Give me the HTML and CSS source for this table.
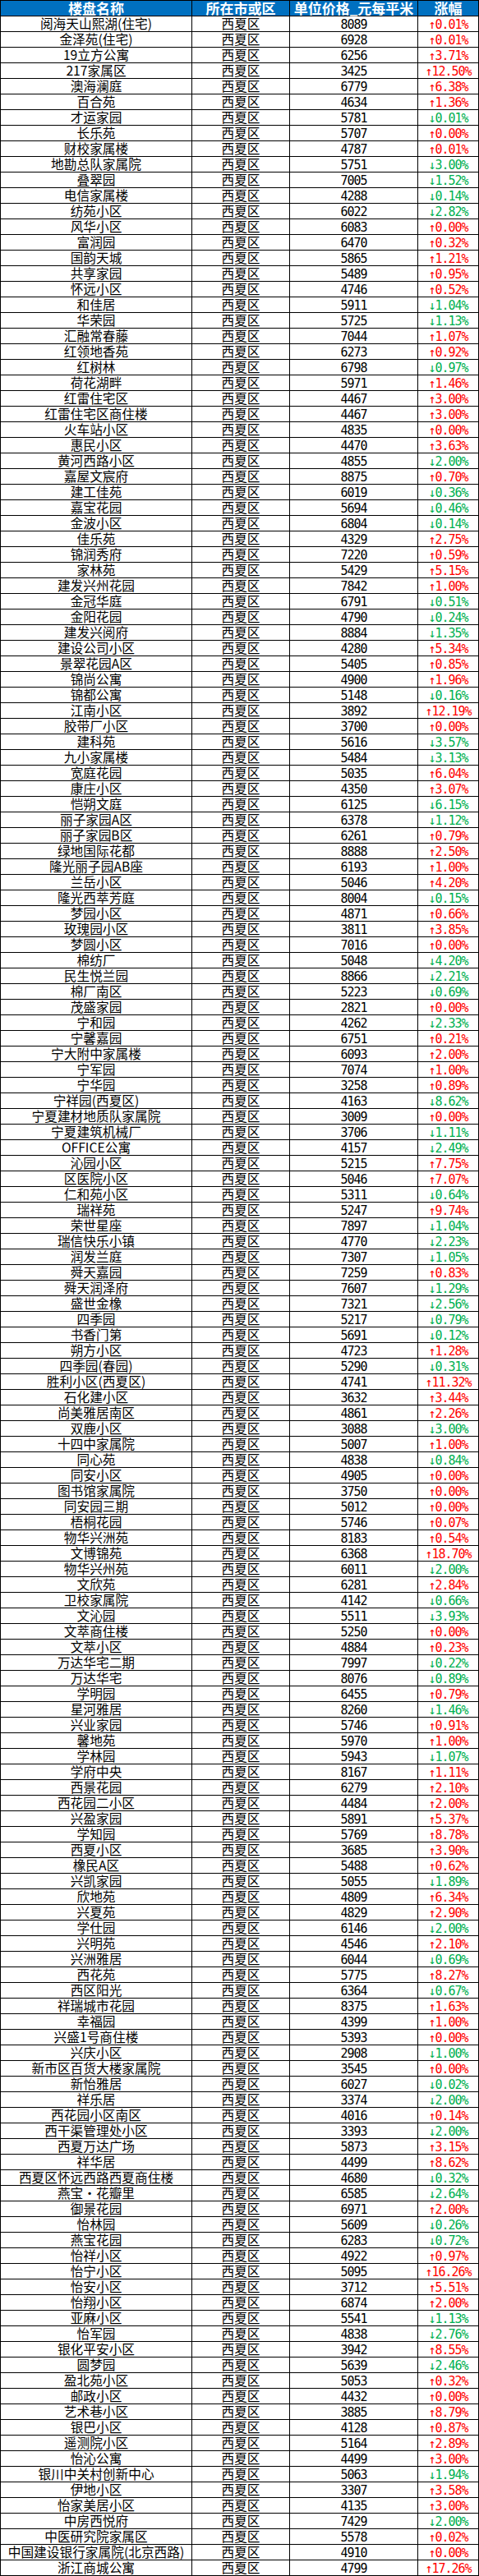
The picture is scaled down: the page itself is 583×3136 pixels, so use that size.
FILE: index.html
```html
<!DOCTYPE html>
<html lang="zh-CN">
<head>
<meta charset="utf-8">
<title>西夏区楼盘单位价格</title>
<link rel="stylesheet" href="styles.css">
</head>
<body>
<table class="sheet">
<colgroup><col class="c-name"><col class="c-area"><col class="c-price"><col class="c-chg"></colgroup>
<thead>
<tr><th>楼盘名称</th><th>所在市或区</th><th>单位价格_元每平米</th><th>涨幅</th></tr>
</thead>
<tbody>
<tr><td>阅海天山熙湖(住宅)</td><td>西夏区</td><td class="num">8089</td><td class="num up">↑0.01%</td></tr>
<tr><td>金泽苑(住宅)</td><td>西夏区</td><td class="num">6928</td><td class="num up">↑0.01%</td></tr>
<tr><td>19立方公寓</td><td>西夏区</td><td class="num">6256</td><td class="num up">↑3.71%</td></tr>
<tr><td>217家属区</td><td>西夏区</td><td class="num">3425</td><td class="num up">↑12.50%</td></tr>
<tr><td>澳海澜庭</td><td>西夏区</td><td class="num">6779</td><td class="num up">↑6.38%</td></tr>
<tr><td>百合苑</td><td>西夏区</td><td class="num">4634</td><td class="num up">↑1.36%</td></tr>
<tr><td>才运家园</td><td>西夏区</td><td class="num">5781</td><td class="num dn">↓0.01%</td></tr>
<tr><td>长乐苑</td><td>西夏区</td><td class="num">5707</td><td class="num up">↑0.00%</td></tr>
<tr><td>财校家属楼</td><td>西夏区</td><td class="num">4787</td><td class="num up">↑0.01%</td></tr>
<tr><td>地勘总队家属院</td><td>西夏区</td><td class="num">5751</td><td class="num dn">↓3.00%</td></tr>
<tr><td>叠翠园</td><td>西夏区</td><td class="num">7005</td><td class="num dn">↓1.52%</td></tr>
<tr><td>电信家属楼</td><td>西夏区</td><td class="num">4288</td><td class="num dn">↓0.14%</td></tr>
<tr><td>纺苑小区</td><td>西夏区</td><td class="num">6022</td><td class="num dn">↓2.82%</td></tr>
<tr><td>风华小区</td><td>西夏区</td><td class="num">6083</td><td class="num up">↑0.00%</td></tr>
<tr><td>富润园</td><td>西夏区</td><td class="num">6470</td><td class="num up">↑0.32%</td></tr>
<tr><td>国韵天城</td><td>西夏区</td><td class="num">5865</td><td class="num up">↑1.21%</td></tr>
<tr><td>共享家园</td><td>西夏区</td><td class="num">5489</td><td class="num up">↑0.95%</td></tr>
<tr><td>怀远小区</td><td>西夏区</td><td class="num">4746</td><td class="num up">↑0.52%</td></tr>
<tr><td>和佳居</td><td>西夏区</td><td class="num">5911</td><td class="num dn">↓1.04%</td></tr>
<tr><td>华荣园</td><td>西夏区</td><td class="num">5725</td><td class="num dn">↓1.13%</td></tr>
<tr><td>汇融常春藤</td><td>西夏区</td><td class="num">7044</td><td class="num up">↑1.07%</td></tr>
<tr><td>红领地香苑</td><td>西夏区</td><td class="num">6273</td><td class="num up">↑0.92%</td></tr>
<tr><td>红树林</td><td>西夏区</td><td class="num">6798</td><td class="num dn">↓0.97%</td></tr>
<tr><td>荷花湖畔</td><td>西夏区</td><td class="num">5971</td><td class="num up">↑1.46%</td></tr>
<tr><td>红雷住宅区</td><td>西夏区</td><td class="num">4467</td><td class="num up">↑3.00%</td></tr>
<tr><td>红雷住宅区商住楼</td><td>西夏区</td><td class="num">4467</td><td class="num up">↑3.00%</td></tr>
<tr><td>火车站小区</td><td>西夏区</td><td class="num">4835</td><td class="num up">↑0.00%</td></tr>
<tr><td>惠民小区</td><td>西夏区</td><td class="num">4470</td><td class="num up">↑3.63%</td></tr>
<tr><td>黄河西路小区</td><td>西夏区</td><td class="num">4855</td><td class="num dn">↓2.00%</td></tr>
<tr><td>嘉屋文宸府</td><td>西夏区</td><td class="num">8875</td><td class="num up">↑0.70%</td></tr>
<tr><td>建工佳苑</td><td>西夏区</td><td class="num">6019</td><td class="num dn">↓0.36%</td></tr>
<tr><td>嘉宝花园</td><td>西夏区</td><td class="num">5694</td><td class="num dn">↓0.46%</td></tr>
<tr><td>金波小区</td><td>西夏区</td><td class="num">6804</td><td class="num dn">↓0.14%</td></tr>
<tr><td>佳乐苑</td><td>西夏区</td><td class="num">4329</td><td class="num up">↑2.75%</td></tr>
<tr><td>锦润秀府</td><td>西夏区</td><td class="num">7220</td><td class="num up">↑0.59%</td></tr>
<tr><td>家林苑</td><td>西夏区</td><td class="num">5429</td><td class="num up">↑5.15%</td></tr>
<tr><td>建发兴州花园</td><td>西夏区</td><td class="num">7842</td><td class="num up">↑1.00%</td></tr>
<tr><td>金冠华庭</td><td>西夏区</td><td class="num">6791</td><td class="num dn">↓0.51%</td></tr>
<tr><td>金阳花园</td><td>西夏区</td><td class="num">4790</td><td class="num dn">↓0.24%</td></tr>
<tr><td>建发兴阅府</td><td>西夏区</td><td class="num">8884</td><td class="num dn">↓1.35%</td></tr>
<tr><td>建设公司小区</td><td>西夏区</td><td class="num">4280</td><td class="num up">↑5.34%</td></tr>
<tr><td>景翠花园A区</td><td>西夏区</td><td class="num">5405</td><td class="num up">↑0.85%</td></tr>
<tr><td>锦尚公寓</td><td>西夏区</td><td class="num">4900</td><td class="num up">↑1.96%</td></tr>
<tr><td>锦都公寓</td><td>西夏区</td><td class="num">5148</td><td class="num dn">↓0.16%</td></tr>
<tr><td>江南小区</td><td>西夏区</td><td class="num">3892</td><td class="num up">↑12.19%</td></tr>
<tr><td>胶带厂小区</td><td>西夏区</td><td class="num">3700</td><td class="num up">↑0.00%</td></tr>
<tr><td>建科苑</td><td>西夏区</td><td class="num">5616</td><td class="num dn">↓3.57%</td></tr>
<tr><td>九小家属楼</td><td>西夏区</td><td class="num">5484</td><td class="num dn">↓3.13%</td></tr>
<tr><td>宽庭花园</td><td>西夏区</td><td class="num">5035</td><td class="num up">↑6.04%</td></tr>
<tr><td>康庄小区</td><td>西夏区</td><td class="num">4350</td><td class="num up">↑3.07%</td></tr>
<tr><td>恺朔文庭</td><td>西夏区</td><td class="num">6125</td><td class="num dn">↓6.15%</td></tr>
<tr><td>丽子家园A区</td><td>西夏区</td><td class="num">6378</td><td class="num dn">↓1.12%</td></tr>
<tr><td>丽子家园B区</td><td>西夏区</td><td class="num">6261</td><td class="num up">↑0.79%</td></tr>
<tr><td>绿地国际花都</td><td>西夏区</td><td class="num">8888</td><td class="num up">↑2.50%</td></tr>
<tr><td>隆光丽子园AB座</td><td>西夏区</td><td class="num">6193</td><td class="num up">↑1.00%</td></tr>
<tr><td>兰岳小区</td><td>西夏区</td><td class="num">5046</td><td class="num up">↑4.20%</td></tr>
<tr><td>隆光西萃芳庭</td><td>西夏区</td><td class="num">8004</td><td class="num dn">↓0.15%</td></tr>
<tr><td>梦园小区</td><td>西夏区</td><td class="num">4871</td><td class="num up">↑0.66%</td></tr>
<tr><td>玫瑰园小区</td><td>西夏区</td><td class="num">3811</td><td class="num up">↑3.85%</td></tr>
<tr><td>梦圆小区</td><td>西夏区</td><td class="num">7016</td><td class="num up">↑0.00%</td></tr>
<tr><td>棉纺厂</td><td>西夏区</td><td class="num">5048</td><td class="num dn">↓4.20%</td></tr>
<tr><td>民生悦兰园</td><td>西夏区</td><td class="num">8866</td><td class="num dn">↓2.21%</td></tr>
<tr><td>棉厂南区</td><td>西夏区</td><td class="num">5223</td><td class="num dn">↓0.69%</td></tr>
<tr><td>茂盛家园</td><td>西夏区</td><td class="num">2821</td><td class="num up">↑0.00%</td></tr>
<tr><td>宁和园</td><td>西夏区</td><td class="num">4262</td><td class="num dn">↓2.33%</td></tr>
<tr><td>宁馨嘉园</td><td>西夏区</td><td class="num">6751</td><td class="num up">↑0.21%</td></tr>
<tr><td>宁大附中家属楼</td><td>西夏区</td><td class="num">6093</td><td class="num up">↑2.00%</td></tr>
<tr><td>宁军园</td><td>西夏区</td><td class="num">7074</td><td class="num up">↑1.00%</td></tr>
<tr><td>宁华园</td><td>西夏区</td><td class="num">3258</td><td class="num up">↑0.89%</td></tr>
<tr><td>宁祥园(西夏区)</td><td>西夏区</td><td class="num">4163</td><td class="num dn">↓8.62%</td></tr>
<tr><td>宁夏建材地质队家属院</td><td>西夏区</td><td class="num">3009</td><td class="num up">↑0.00%</td></tr>
<tr><td>宁夏建筑机械厂</td><td>西夏区</td><td class="num">3706</td><td class="num dn">↓1.11%</td></tr>
<tr><td>OFFICE公寓</td><td>西夏区</td><td class="num">4157</td><td class="num dn">↓2.49%</td></tr>
<tr><td>沁园小区</td><td>西夏区</td><td class="num">5215</td><td class="num up">↑7.75%</td></tr>
<tr><td>区医院小区</td><td>西夏区</td><td class="num">5046</td><td class="num up">↑7.07%</td></tr>
<tr><td>仁和苑小区</td><td>西夏区</td><td class="num">5311</td><td class="num dn">↓0.64%</td></tr>
<tr><td>瑞祥苑</td><td>西夏区</td><td class="num">5247</td><td class="num up">↑9.74%</td></tr>
<tr><td>荣世星座</td><td>西夏区</td><td class="num">7897</td><td class="num dn">↓1.04%</td></tr>
<tr><td>瑞信快乐小镇</td><td>西夏区</td><td class="num">4770</td><td class="num dn">↓2.23%</td></tr>
<tr><td>润发兰庭</td><td>西夏区</td><td class="num">7307</td><td class="num dn">↓1.05%</td></tr>
<tr><td>舜天嘉园</td><td>西夏区</td><td class="num">7259</td><td class="num up">↑0.83%</td></tr>
<tr><td>舜天润泽府</td><td>西夏区</td><td class="num">7607</td><td class="num dn">↓1.29%</td></tr>
<tr><td>盛世金橡</td><td>西夏区</td><td class="num">7321</td><td class="num dn">↓2.56%</td></tr>
<tr><td>四季园</td><td>西夏区</td><td class="num">5217</td><td class="num dn">↓0.79%</td></tr>
<tr><td>书香门第</td><td>西夏区</td><td class="num">5691</td><td class="num dn">↓0.12%</td></tr>
<tr><td>朔方小区</td><td>西夏区</td><td class="num">4723</td><td class="num up">↑1.28%</td></tr>
<tr><td>四季园(春园)</td><td>西夏区</td><td class="num">5290</td><td class="num dn">↓0.31%</td></tr>
<tr><td>胜利小区(西夏区)</td><td>西夏区</td><td class="num">4741</td><td class="num up">↑11.32%</td></tr>
<tr><td>石化建小区</td><td>西夏区</td><td class="num">3632</td><td class="num up">↑3.44%</td></tr>
<tr><td>尚美雅居南区</td><td>西夏区</td><td class="num">4861</td><td class="num up">↑2.26%</td></tr>
<tr><td>双鹿小区</td><td>西夏区</td><td class="num">3088</td><td class="num dn">↓3.00%</td></tr>
<tr><td>十四中家属院</td><td>西夏区</td><td class="num">5007</td><td class="num up">↑1.00%</td></tr>
<tr><td>同心苑</td><td>西夏区</td><td class="num">4838</td><td class="num dn">↓0.84%</td></tr>
<tr><td>同安小区</td><td>西夏区</td><td class="num">4905</td><td class="num up">↑0.00%</td></tr>
<tr><td>图书馆家属院</td><td>西夏区</td><td class="num">3750</td><td class="num up">↑0.00%</td></tr>
<tr><td>同安园三期</td><td>西夏区</td><td class="num">5012</td><td class="num up">↑0.00%</td></tr>
<tr><td>梧桐花园</td><td>西夏区</td><td class="num">5746</td><td class="num up">↑0.07%</td></tr>
<tr><td>物华兴洲苑</td><td>西夏区</td><td class="num">8183</td><td class="num up">↑0.54%</td></tr>
<tr><td>文博锦苑</td><td>西夏区</td><td class="num">6368</td><td class="num up">↑18.70%</td></tr>
<tr><td>物华兴州苑</td><td>西夏区</td><td class="num">6011</td><td class="num dn">↓2.00%</td></tr>
<tr><td>文欣苑</td><td>西夏区</td><td class="num">6281</td><td class="num up">↑2.84%</td></tr>
<tr><td>卫校家属院</td><td>西夏区</td><td class="num">4142</td><td class="num dn">↓0.66%</td></tr>
<tr><td>文沁园</td><td>西夏区</td><td class="num">5511</td><td class="num dn">↓3.93%</td></tr>
<tr><td>文萃商住楼</td><td>西夏区</td><td class="num">5250</td><td class="num up">↑0.00%</td></tr>
<tr><td>文萃小区</td><td>西夏区</td><td class="num">4884</td><td class="num up">↑0.23%</td></tr>
<tr><td>万达华宅二期</td><td>西夏区</td><td class="num">7997</td><td class="num dn">↓0.22%</td></tr>
<tr><td>万达华宅</td><td>西夏区</td><td class="num">8076</td><td class="num dn">↓0.89%</td></tr>
<tr><td>学明园</td><td>西夏区</td><td class="num">6455</td><td class="num up">↑0.79%</td></tr>
<tr><td>星河雅居</td><td>西夏区</td><td class="num">8260</td><td class="num dn">↓1.46%</td></tr>
<tr><td>兴业家园</td><td>西夏区</td><td class="num">5746</td><td class="num up">↑0.91%</td></tr>
<tr><td>馨地苑</td><td>西夏区</td><td class="num">5970</td><td class="num up">↑1.00%</td></tr>
<tr><td>学林园</td><td>西夏区</td><td class="num">5943</td><td class="num dn">↓1.07%</td></tr>
<tr><td>学府中央</td><td>西夏区</td><td class="num">8167</td><td class="num up">↑1.11%</td></tr>
<tr><td>西景花园</td><td>西夏区</td><td class="num">6279</td><td class="num up">↑2.10%</td></tr>
<tr><td>西花园二小区</td><td>西夏区</td><td class="num">4484</td><td class="num up">↑2.00%</td></tr>
<tr><td>兴盈家园</td><td>西夏区</td><td class="num">5891</td><td class="num up">↑5.37%</td></tr>
<tr><td>学知园</td><td>西夏区</td><td class="num">5769</td><td class="num up">↑8.78%</td></tr>
<tr><td>西夏小区</td><td>西夏区</td><td class="num">3685</td><td class="num up">↑3.90%</td></tr>
<tr><td>橡民A区</td><td>西夏区</td><td class="num">5488</td><td class="num up">↑0.62%</td></tr>
<tr><td>兴凯家园</td><td>西夏区</td><td class="num">5055</td><td class="num dn">↓1.89%</td></tr>
<tr><td>欣地苑</td><td>西夏区</td><td class="num">4809</td><td class="num up">↑6.34%</td></tr>
<tr><td>兴夏苑</td><td>西夏区</td><td class="num">4829</td><td class="num up">↑2.90%</td></tr>
<tr><td>学仕园</td><td>西夏区</td><td class="num">6146</td><td class="num dn">↓2.00%</td></tr>
<tr><td>兴明苑</td><td>西夏区</td><td class="num">4546</td><td class="num up">↑2.10%</td></tr>
<tr><td>兴洲雅居</td><td>西夏区</td><td class="num">6044</td><td class="num dn">↓0.69%</td></tr>
<tr><td>西花苑</td><td>西夏区</td><td class="num">5775</td><td class="num up">↑8.27%</td></tr>
<tr><td>西区阳光</td><td>西夏区</td><td class="num">6364</td><td class="num dn">↓0.67%</td></tr>
<tr><td>祥瑞城市花园</td><td>西夏区</td><td class="num">8375</td><td class="num up">↑1.63%</td></tr>
<tr><td>幸福园</td><td>西夏区</td><td class="num">4399</td><td class="num up">↑1.00%</td></tr>
<tr><td>兴盛1号商住楼</td><td>西夏区</td><td class="num">5393</td><td class="num up">↑0.00%</td></tr>
<tr><td>兴庆小区</td><td>西夏区</td><td class="num">2908</td><td class="num dn">↓1.00%</td></tr>
<tr><td>新市区百货大楼家属院</td><td>西夏区</td><td class="num">3545</td><td class="num up">↑0.00%</td></tr>
<tr><td>新怡雅居</td><td>西夏区</td><td class="num">6027</td><td class="num dn">↓0.02%</td></tr>
<tr><td>祥乐居</td><td>西夏区</td><td class="num">3374</td><td class="num dn">↓2.00%</td></tr>
<tr><td>西花园小区南区</td><td>西夏区</td><td class="num">4016</td><td class="num up">↑0.14%</td></tr>
<tr><td>西干渠管理处小区</td><td>西夏区</td><td class="num">3393</td><td class="num dn">↓2.00%</td></tr>
<tr><td>西夏万达广场</td><td>西夏区</td><td class="num">5873</td><td class="num up">↑3.15%</td></tr>
<tr><td>祥华居</td><td>西夏区</td><td class="num">4499</td><td class="num up">↑8.62%</td></tr>
<tr><td>西夏区怀远西路西夏商住楼</td><td>西夏区</td><td class="num">4680</td><td class="num dn">↓0.32%</td></tr>
<tr><td>燕宝·花瓣里</td><td>西夏区</td><td class="num">6585</td><td class="num dn">↓2.64%</td></tr>
<tr><td>御景花园</td><td>西夏区</td><td class="num">6971</td><td class="num up">↑2.00%</td></tr>
<tr><td>怡林园</td><td>西夏区</td><td class="num">5609</td><td class="num dn">↓0.26%</td></tr>
<tr><td>燕宝花园</td><td>西夏区</td><td class="num">6283</td><td class="num dn">↓0.72%</td></tr>
<tr><td>怡祥小区</td><td>西夏区</td><td class="num">4922</td><td class="num up">↑0.97%</td></tr>
<tr><td>怡宁小区</td><td>西夏区</td><td class="num">5095</td><td class="num up">↑16.26%</td></tr>
<tr><td>怡安小区</td><td>西夏区</td><td class="num">3712</td><td class="num up">↑5.51%</td></tr>
<tr><td>怡翔小区</td><td>西夏区</td><td class="num">6874</td><td class="num up">↑2.00%</td></tr>
<tr><td>亚麻小区</td><td>西夏区</td><td class="num">5541</td><td class="num dn">↓1.13%</td></tr>
<tr><td>怡军园</td><td>西夏区</td><td class="num">4838</td><td class="num dn">↓2.76%</td></tr>
<tr><td>银化平安小区</td><td>西夏区</td><td class="num">3942</td><td class="num up">↑8.55%</td></tr>
<tr><td>圆梦园</td><td>西夏区</td><td class="num">5639</td><td class="num dn">↓2.46%</td></tr>
<tr><td>盈北苑小区</td><td>西夏区</td><td class="num">5053</td><td class="num up">↑0.32%</td></tr>
<tr><td>邮政小区</td><td>西夏区</td><td class="num">4432</td><td class="num up">↑0.00%</td></tr>
<tr><td>艺术巷小区</td><td>西夏区</td><td class="num">3885</td><td class="num up">↑8.79%</td></tr>
<tr><td>银巴小区</td><td>西夏区</td><td class="num">4128</td><td class="num up">↑0.87%</td></tr>
<tr><td>遥测院小区</td><td>西夏区</td><td class="num">5164</td><td class="num up">↑2.89%</td></tr>
<tr><td>怡沁公寓</td><td>西夏区</td><td class="num">4499</td><td class="num up">↑3.00%</td></tr>
<tr><td>银川中关村创新中心</td><td>西夏区</td><td class="num">5063</td><td class="num dn">↓1.94%</td></tr>
<tr><td>伊地小区</td><td>西夏区</td><td class="num">3307</td><td class="num up">↑3.58%</td></tr>
<tr><td>怡家美居小区</td><td>西夏区</td><td class="num">4135</td><td class="num up">↑3.00%</td></tr>
<tr><td>中房西悦府</td><td>西夏区</td><td class="num">7429</td><td class="num dn">↓2.00%</td></tr>
<tr><td>中医研究院家属区</td><td>西夏区</td><td class="num">5578</td><td class="num up">↑0.02%</td></tr>
<tr><td>中国建设银行家属院(北京西路)</td><td>西夏区</td><td class="num">4910</td><td class="num up">↑0.00%</td></tr>
<tr><td>浙江商城公寓</td><td>西夏区</td><td class="num">4799</td><td class="num up">↑17.26%</td></tr>
</tbody>
</table>
</body>
</html>
```
FILE: styles.css
```css
html, body {
  margin: 0;
  padding: 0;
  background: #ffffff;
}

.sheet {
  width: 583px;
  table-layout: fixed;
  border-collapse: separate;
  border-spacing: 1px;
  background: #000000;
  font-family: "Noto Sans CJK SC", "Noto Sans", sans-serif;
  color: #000000;
}

.c-name { width: 232px; }
.c-area { width: 118px; }
.c-price { width: 155px; }
.c-chg { width: 73px; }

.sheet th,
.sheet td {
  height: 18px;
  padding: 0;
  box-sizing: border-box;
  text-align: center;
  vertical-align: top;
  white-space: nowrap;
}

.sheet th {
  background: #0070c0;
  color: #ffffff;
  font-size: 17px;
  font-weight: bold;
  line-height: 18px;
}

.sheet td {
  background: #ffffff;
  font-size: 15.7px;
  line-height: 18px;
}

.sheet td.num {
  font-family: "DejaVu Sans Mono", "Liberation Mono", monospace;
  font-size: 15px;
  letter-spacing: -1px;
  line-height: 15px;
  padding-top: 3px;
}

.sheet td.up { color: #ff0000; }
.sheet td.dn { color: #00b050; }
```
